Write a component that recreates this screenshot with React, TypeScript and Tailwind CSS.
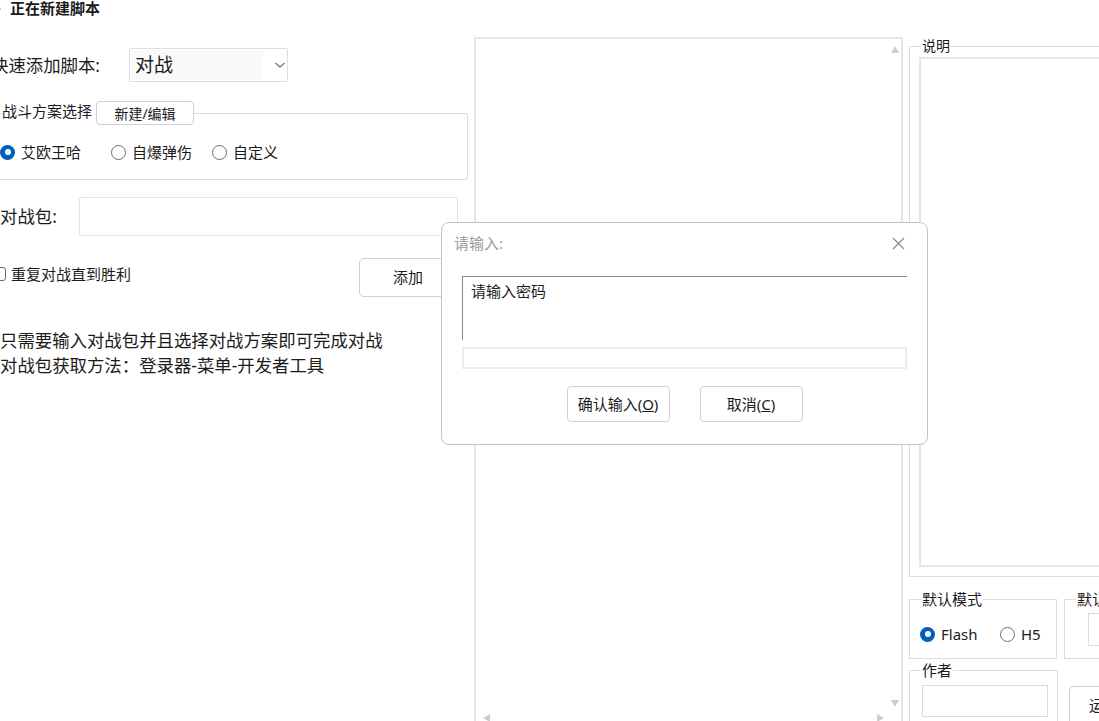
import React from 'react';

const font = "font-['Noto_Sans','Noto_Sans_CJK_SC',sans-serif]";

function Radio({ checked, label, className }: { checked?: boolean; label: string; className?: string }) {
  return (
    <div className={`flex items-center h-[20px] ${className ?? ''}`}>
      {checked ? (
        <span className="w-[15px] h-[15px] rounded-full bg-[#005fb8] flex items-center justify-center shrink-0">
          <span className="w-[6px] h-[6px] rounded-full bg-white" />
        </span>
      ) : (
        <span className="w-[15px] h-[15px] rounded-full border-[1.5px] border-[#6f6f6f] shrink-0" />
      )}
      <span className="ml-[6px] text-[15px] leading-[20px]">{label}</span>
    </div>
  );
}

function ScrollArrow({ dir }: { dir: 'up' | 'down' | 'left' | 'right' }) {
  const pts = {
    up: '4,0 8,7 0,7',
    down: '0,0 8,0 4,7',
    left: '7,0 7,8 0,4',
    right: '0,0 7,4 0,8',
  }[dir];
  return (
    <svg width="8" height="8" viewBox="0 0 8 8">
      <polygon points={pts} fill="#cdcdcd" />
    </svg>
  );
}

function Button({ children, className }: { children: React.ReactNode; className?: string }) {
  return (
    <div className={`border border-[#d0d0d0] rounded-[4px] bg-white flex items-center justify-center text-[15px] ${className ?? ''}`}>
      {children}
    </div>
  );
}

export default function App() {
  return (
    <div className={`w-[1099px] h-[721px] overflow-hidden bg-white flex relative text-[#1b1b1b] ${font}`}>
      {/* left panel */}
      <div className="-ml-[12px] w-[486px] shrink-0 flex flex-col">
        <div className="flex items-center h-[17px]">
          <svg width="12" height="12" viewBox="0 0 12 12" className="ml-[3px]">
            <path d="M3 2 L10 6 L3 10 Z" fill="#1f2a44" />
          </svg>
          <span className="ml-[7px] text-[15px] font-bold leading-[17px]">正在新建脚本</span>
        </div>

        <div className="mt-[31px] flex items-center h-[34px]">
          <span className="w-[141px] pl-[3px] text-[17.4px]">快速添加脚本:</span>
          <div className="w-[159px] h-[34px] border border-[#dedede] rounded-[2px] flex items-center">
            <div className="w-[132px] h-[30px] ml-[1px] bg-[#fafafa] pl-[4px] text-[19px] leading-[30px]">对战</div>
            <svg width="12" height="8" viewBox="0 0 12 8" className="ml-[11px]">
              <path d="M1.5 2 L6 6 L10.5 2" stroke="#6e6e6e" strokeWidth="1.2" fill="none" />
            </svg>
          </div>
        </div>

        <fieldset className="mt-[19px] w-[480px] border border-[#dcdcdc] rounded-[2px] pb-[17px]">
          <legend className="ml-[13px] flex items-center">
            <span className="text-[15px] leading-[20px] pr-[4px] relative -top-[2px]">战斗方案选择</span>
            <Button className="w-[98px] h-[24px] !text-[14px]">新建/编辑</Button>
          </legend>
          <div className="pt-[17px] pl-[11px] flex items-center">
            <Radio checked label="艾欧王哈" className="w-[111px]" />
            <Radio label="自爆弹伤" className="w-[101px]" />
            <Radio label="自定义" />
          </div>
        </fieldset>

        <div className="mt-[17px] flex items-center h-[39px]">
          <span className="w-[91px] pl-[12px] text-[17.4px]">对战包:</span>
          <div className="w-[379px] h-[39px] border border-[#e3e3e3] rounded-[2px]" />
        </div>

        <div className="mt-[22px] flex items-start h-[39px]">
          <div className="w-[371px] mt-[6px] pl-[4px] flex items-center">
            <span className="w-[14px] h-[14px] border border-[#6b6b6b] rounded-[3px] shrink-0" />
            <span className="ml-[5px] text-[15px] leading-[20px]">重复对战直到胜利</span>
          </div>
          <Button className="w-[98px] h-[39px] rounded-[5px]">添加</Button>
        </div>

        <div className="mt-[31px] pl-[12px] text-[17.4px] leading-[25px]">
          <div>只需要输入对战包并且选择对战方案即可完成对战</div>
          <div>对战包获取方法：登录器-菜单-开发者工具</div>
        </div>
      </div>

      {/* list box */}
      <div className="mt-[37px] w-[429px] h-[690px] border-2 border-[#e6e6e6] shrink-0 relative">
        <div className="absolute right-[2px] top-[7px]"><ScrollArrow dir="up" /></div>
        <div className="absolute right-[2px] top-[661px]"><ScrollArrow dir="down" /></div>
        <div className="absolute left-[7px] top-[675px]"><ScrollArrow dir="left" /></div>
        <div className="absolute left-[401px] top-[675px]"><ScrollArrow dir="right" /></div>
      </div>

      {/* right panel */}
      <div className="ml-[6px] w-[240px] shrink-0 flex flex-col">
        <fieldset className="mt-[36px] w-[240px] border border-[#dcdcdc] pb-[9px]">
          <legend className="ml-[11px] text-[14px] leading-[20px] px-[1px]">说明</legend>
          <div className="ml-[9px] mt-[1px] h-[510px] border-2 border-[#e6e6e6]" />
        </fieldset>

        <div className="mt-[12px] flex gap-[7px]">
          <fieldset className="w-[148px] shrink-0 border border-[#dcdcdc] pb-[14px]">
            <legend className="ml-[11px] text-[15px] leading-[20px] px-[1px]">默认模式</legend>
            <div className="pt-[15px] pl-[10px] flex items-center">
              <Radio checked label="Flash" className="w-[80px]" />
              <Radio label="H5" />
            </div>
          </fieldset>
          <fieldset className="w-[80px] shrink-0 border border-[#dcdcdc] pb-[11px]">
            <legend className="ml-[11px] text-[15px] leading-[20px] px-[1px]">默认</legend>
            <div className="ml-[23px] mt-[4px] h-[33px] border border-[#dcdcdc]" />
          </fieldset>
        </div>

        <div className="mt-[1px] flex gap-[11px]">
          <fieldset className="w-[149px] shrink-0 border border-[#dcdcdc] pb-[10px]">
            <legend className="ml-[11px] text-[15px] leading-[20px] px-[1px]">作者</legend>
            <div className="ml-[12px] mt-[5px] w-[126px] h-[32px] border border-[#dcdcdc]" />
          </fieldset>
          <Button className="mt-[26px] w-[70px] h-[39px] rounded-[5px] shrink-0">运行</Button>
        </div>
      </div>

      {/* input dialog */}
      <div className="absolute left-[441px] top-[222px] w-[487px] h-[223px] bg-white border border-[#c4c4c4] rounded-[8px] flex flex-col">
        <div className="mt-[10px] h-[20px] flex items-center pl-[12px] pr-[22px]">
          <span className="text-[15px] leading-[20px] text-[#9a9a9a]">请输入:</span>
          <svg width="13" height="13" viewBox="0 0 13 13" className="ml-auto">
            <path d="M1 1 L12 12 M12 1 L1 12" stroke="#8a8a8a" strokeWidth="1.2" />
          </svg>
        </div>
        <div className="mx-[20px] mt-[23px] h-[64px] border-t border-l border-[#8a8a8a] pl-[8px] pt-[3px] text-[15px] leading-[22px]">
          请输入密码
        </div>
        <div className="mx-[20px] mt-[7px] h-[22px] border-2 border-[#ececec]" />
        <div className="mt-[17px] flex justify-center gap-[30px]">
          <Button className="w-[103px] h-[36px]">
            确认输入(<span className="underline">O</span>)
          </Button>
          <Button className="w-[103px] h-[36px]">
            取消(<span className="underline">C</span>)
          </Button>
        </div>
      </div>
    </div>
  );
}
